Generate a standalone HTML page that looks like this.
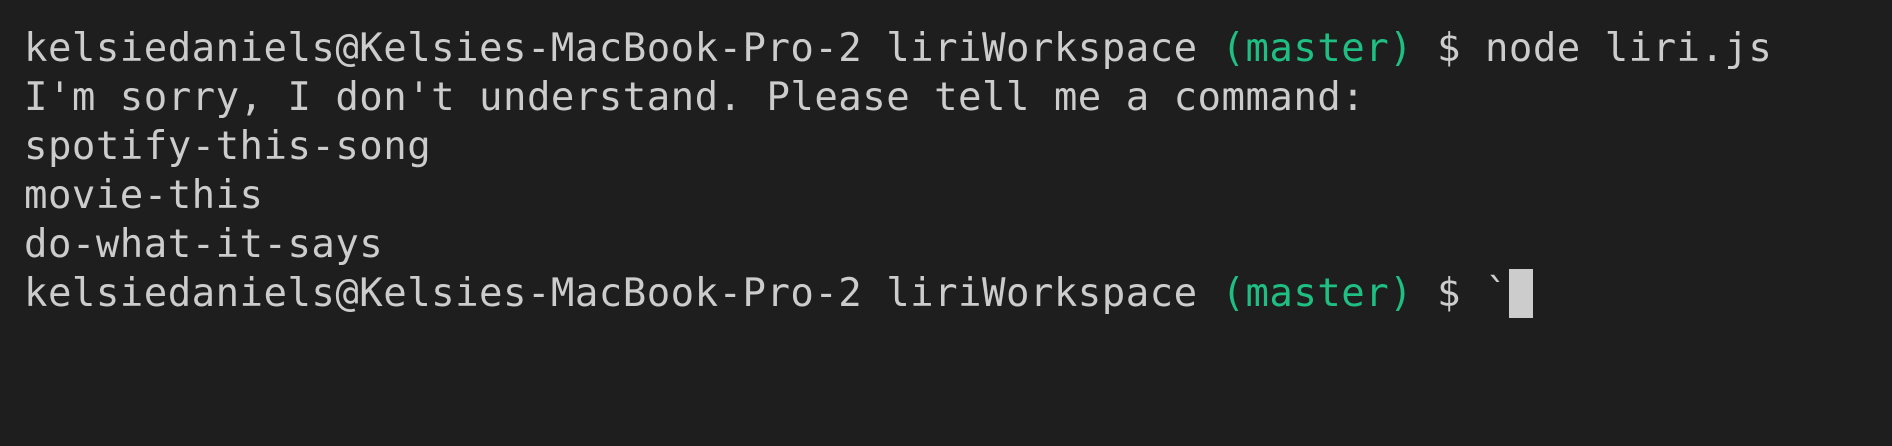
<!DOCTYPE html>
<html><head><meta charset="utf-8"><style>
html,body{margin:0;padding:0;background:#1e1e1e;width:1892px;height:446px;overflow:hidden}
pre{margin:0;position:absolute;left:24px;top:24px;font-family:"DejaVu Sans Mono","Liberation Mono",monospace;font-size:39px;line-height:49px;letter-spacing:0.47px;color:#cccccc;white-space:pre}
.g{color:#1fbf83}
.c{display:inline-block;width:24px;height:49px;background:#cccccc;vertical-align:top}
</style></head><body>
<pre>kelsiedaniels@Kelsies-MacBook-Pro-2 liriWorkspace <span class="g">(master)</span> $ node liri.js
I'm sorry, I don't understand. Please tell me a command:
spotify-this-song
movie-this
do-what-it-says
kelsiedaniels@Kelsies-MacBook-Pro-2 liriWorkspace <span class="g">(master)</span> $ `<span class="c"></span></pre>
</body></html>
